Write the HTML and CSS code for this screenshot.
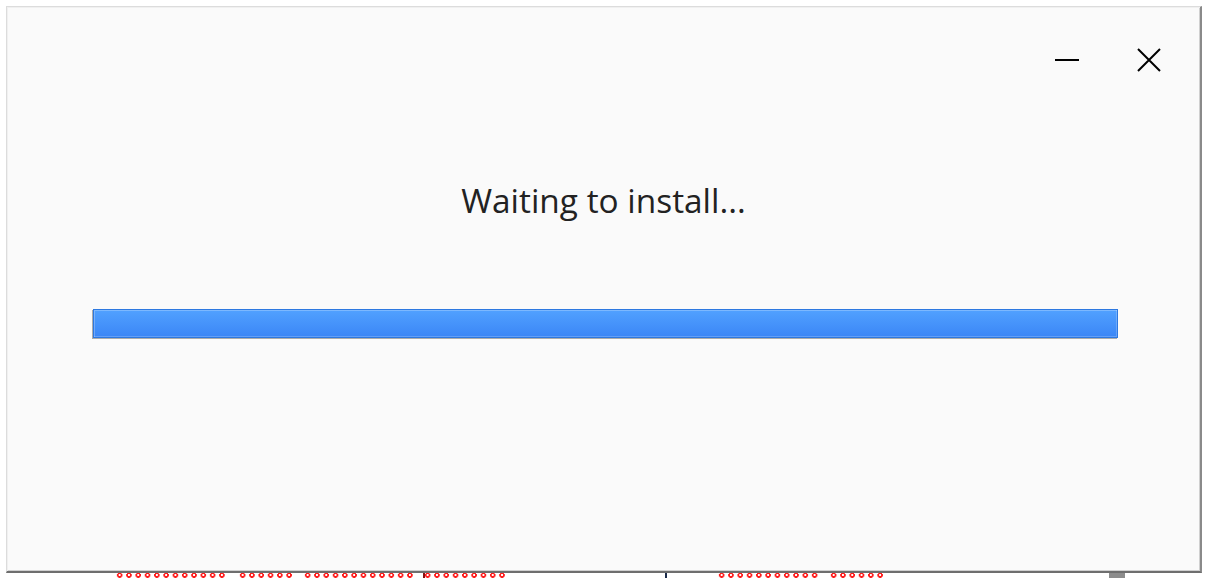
FILE: index.html
```html
<!DOCTYPE html>
<html>
<head>
<meta charset="utf-8">
<link rel="stylesheet" href="styles.css">
</head>
<body>
<div class="underlay">
  <span class="squig" style="left:115px;width:113px"></span>
  <span class="squig" style="left:238px;width:55px"></span>
  <span class="squig" style="left:303px;width:111px"></span>
  <span class="squig" style="left:423px;width:82px"></span>
  <span class="mark mark-a"></span>
  <span class="mark mark-b"></span>
  <span class="squig" style="left:717px;width:102px"></span>
  <span class="squig" style="left:829px;width:56px"></span>
  <span class="gray-block"></span>
</div>
<div class="window">
  <div class="controls">
    <button class="ctl" aria-label="Minimize">
      <svg width="24" height="24" viewBox="0 0 24 24"><line x1="0" y1="12" x2="24" y2="12" stroke="#000" stroke-width="2"/></svg>
    </button>
    <button class="ctl" aria-label="Close">
      <svg width="24" height="24" viewBox="0 0 24 24"><path d="M1 1 L23 23 M23 1 L1 23" stroke="#000" stroke-width="2" fill="none"/></svg>
    </button>
  </div>
  <div class="title">Waiting to install...</div>
  <div class="progress"><div class="bar"></div></div>
</div>
</body>
</html>
```

FILE: styles.css
```css
html, body {
  margin: 0;
  padding: 0;
  background: #ffffff;
}
body {
  width: 1215px;
  height: 578px;
  position: relative;
  overflow: hidden;
  font-family: "Open Sans", "Noto Sans", sans-serif;
}
.underlay {
  position: absolute;
  left: 0;
  top: 573px;
  width: 1215px;
  height: 5px;
}
.squig {
  position: absolute;
  top: 0;
  height: 5px;
  background-image: radial-gradient(circle at 50% 45%, transparent 1.1px, #ff1a1a 1.3px, #ff1a1a 2.5px, transparent 2.8px);
  background-size: 9.3px 5px;
  background-repeat: repeat-x;
}
.mark {
  position: absolute;
  top: 0;
  width: 2px;
  height: 5px;
  background: #222;
}
.mark-a { left: 423px; background: #8a1010; }
.mark-b { left: 665px; background: #1a2a4a; }
.gray-block {
  position: absolute;
  left: 1109px;
  top: 0;
  width: 16px;
  height: 5px;
  background: #8c8c8c;
}
.window {
  position: relative;
  margin: 6px 0 0 6px;
  width: 1193px;
  height: 564px;
  background: #fafafa;
  border-top: 1px solid #dcdcdc;
  border-left: 1px solid #dcdcdc;
  border-right: 2px solid #8a8a8a;
  border-bottom: 2px solid #6e6e6e;
  box-shadow: inset 1px 1px 0 #f0f0f0, inset -1px -1px 0 #d0d0d0;
  display: flex;
  flex-direction: column;
}
.controls {
  display: flex;
  justify-content: flex-end;
  gap: 58px;
  padding: 41px 39px 0 0;
}
.ctl {
  width: 24px;
  height: 24px;
  padding: 0;
  margin: 0;
  border: 0;
  background: transparent;
  display: block;
}
.ctl svg { display: block; }
.title {
  margin-top: 106px;
  text-align: center;
  font-size: 33.4px;
  line-height: 44px;
  color: #222222;
}
.progress {
  margin: 87px 0 0 86px;
  width: 1025px;
  height: 29px;
  box-shadow: -1px 1px 0 #ababab;
}
.bar {
  box-sizing: border-box;
  width: 100%;
  height: 100%;
  border: 1px solid #2d78e0;
  background: linear-gradient(#51a1ff, #3b86f6);
  box-shadow: inset 1px 1px 0 rgba(255,255,255,0.25), inset -1px -1px 0 rgba(255,255,255,0.2);
}
```
